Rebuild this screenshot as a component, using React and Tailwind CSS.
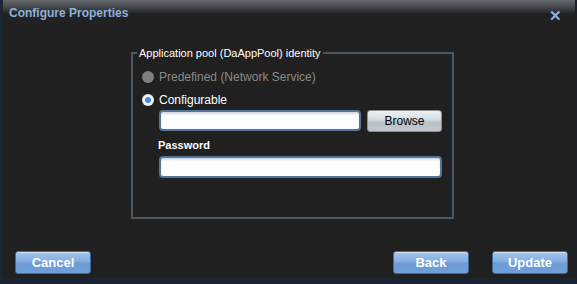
import React from "react";

const font = { fontFamily: '"Liberation Sans", Arial, sans-serif' };

function BlueButton({ children, className = "" }) {
  return (
    <button
      className={`h-[23px] w-[76px] rounded-[3px] border border-[#3f6a9a] bg-[linear-gradient(to_bottom,#a5c6ea_0%,#84ade0_45%,#6d9bd6_55%,#6f9fd9_100%)] text-[13px] font-bold text-white shadow-[inset_0_1px_0_rgba(255,255,255,0.5)] ${className}`}
    >
      {children}
    </button>
  );
}

export default function App() {
  return (
    <div
      style={font}
      className="relative flex h-[284px] w-[577px] flex-col overflow-hidden bg-[#202020] border-l-[3px] border-r-[2px] border-b-[6px] border-l-[#1c2631] border-r-[#1a2029] border-b-[#1b2430]"
    >
      <div className="flex h-[32px] items-start justify-between bg-[linear-gradient(to_bottom,#64686c_0px,#4a4e52_6px,#2c2e30_12px,#222_14px,#202020_32px)] pl-[6px] pr-[13px]">
        <span className="mt-[4px] text-[12px] font-bold text-[#8db1dc]">Configure Properties</span>
        <span className="mt-[8px] text-[15px] font-bold leading-none text-[#8db1dc]">✕</span>
      </div>

      <div className="flex flex-1 pl-[128px] pt-[13px]">
        <fieldset className="h-[174px] w-[323px] border-2 border-[#4a5864] px-[6px] pb-0 pt-[6px]">
          <legend className="ml-[-2px] px-[2px] text-[11px] text-white">Application pool (DaAppPool) identity</legend>
          <div className="flex items-center gap-[5px] pl-[3px]">
            <span className="h-[12px] w-[12px] rounded-full bg-[#7d7f81]" />
            <span className="text-[12px] text-[#8a8a8a]">Predefined (Network Service)</span>
          </div>
          <div className="mt-[5px] flex items-center gap-[5px] pl-[3px]">
            <span className="flex h-[12px] w-[12px] items-center justify-center rounded-full bg-[radial-gradient(circle,#fff_0%,#e6e6e6_100%)]">
              <span className="h-[6px] w-[6px] rounded-full bg-[#3a8ef0]" />
            </span>
            <span className="text-[12px] text-white">Configurable</span>
          </div>
          <div className="ml-[20px] mt-[1px] flex items-center gap-[6px]">
            <div className="h-[21px] w-[202px] rounded-[4px] border-2 border-[#52759e] bg-white shadow-[inset_0_2px_2px_rgba(80,110,160,0.25)]" />
            <button className="h-[22px] w-[75px] rounded-[3px] border border-[#8a8e94] bg-[linear-gradient(to_bottom,#eef0f3_0%,#d6dae0_45%,#b9bfc7_55%,#c2c7ce_100%)] text-[12px] text-black">
              Browse
            </button>
          </div>
          <div className="ml-[19px] mt-[5px] text-[11px] font-bold text-white">Password</div>
          <div className="ml-[20px] mt-[3px] h-[22px] w-[283px] rounded-[4px] border-2 border-[#52759e] bg-white shadow-[inset_0_2px_2px_rgba(80,110,160,0.25)]" />
        </fieldset>
      </div>

      <div className="flex items-center pb-[4px] pl-[12px] pr-[7px]">
        <BlueButton>Cancel</BlueButton>
        <div className="flex-1" />
        <BlueButton>Back</BlueButton>
        <BlueButton className="ml-[23px]">Update</BlueButton>
      </div>
    </div>
  );
}
